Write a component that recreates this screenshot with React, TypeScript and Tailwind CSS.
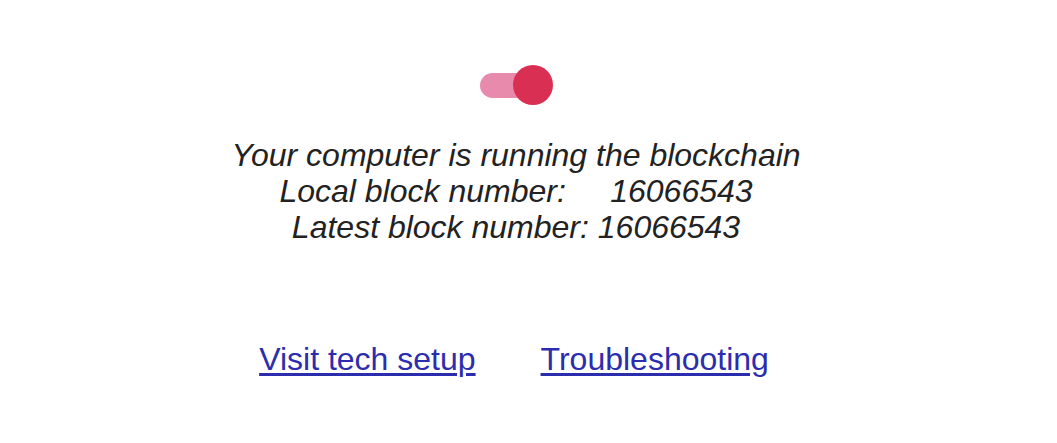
export default function App() {
  return (
    <div className="w-[1057px] h-[443px] bg-white flex flex-col items-center pr-[25px] pt-[65px] font-['Liberation_Sans',Arial,sans-serif]">
      {/* toggle (on) */}
      <div className="relative w-[74px] h-[40px] flex items-center">
        <div className="ml-[1px] w-[58px] h-[25px] rounded-full bg-[#e88aab]" />
        <div className="absolute right-0 top-0 w-[40px] h-[40px] rounded-full bg-[#d92f52]" />
      </div>

      <div className="mt-[32px] text-center italic text-[32px] leading-[36px] text-[#222]">
        <p>Your computer is running the blockchain</p>
        <p className="whitespace-pre">Local block number:     16066543</p>
        <p>Latest block number: 16066543</p>
      </div>

      <div className="mt-[96px] mr-[4px] flex gap-[65px] text-[32px] leading-[36px] text-[#2c2cae]">
        <a href="#" className="underline underline-offset-[3px]">Visit tech setup</a>
        <a href="#" className="underline underline-offset-[3px]">Troubleshooting</a>
      </div>
    </div>
  );
}
